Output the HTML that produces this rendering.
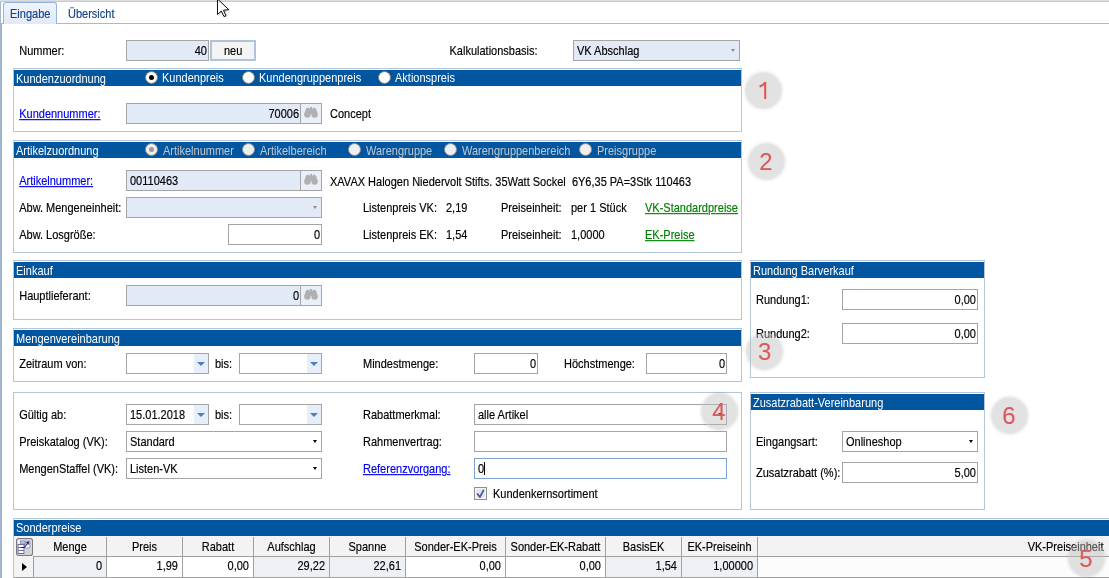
<!DOCTYPE html><html><head><meta charset="utf-8"><style>
html,body{margin:0;padding:0;width:1109px;height:578px;overflow:hidden;background:#fff}
body{position:relative;font-family:"Liberation Sans",sans-serif;font-size:11px;color:#000}
.a{position:absolute}
.t{position:absolute;white-space:pre;line-height:13px;font-size:11px;transform:scaleY(1.13);transform-origin:0 10.3px;-webkit-text-stroke:0.15px currentColor}
.w{color:#fff;-webkit-text-stroke:0}
.lk{color:#0000ee;text-decoration:underline}
.gl{color:#008000;text-decoration:underline}
.dis{color:#c4c8cd;-webkit-text-stroke:0}
.circ{border-radius:50%;background:rgba(190,190,190,0.44);box-shadow:0 0 3px 1px rgba(0,0,0,0.08), inset 0 0 1px 1px rgba(255,255,255,0.22)}
.dig{width:30px;text-align:center;font-size:24px;line-height:24px;color:#dc585a}
</style></head><body>
<div class="a" style="left:0px;top:0px;width:1109px;height:1px;background:#dcdcdc"></div>
<div class="a" style="left:0px;top:1px;width:1109px;height:1px;background:#cacaca"></div>
<div class="a" style="left:0px;top:2px;width:1px;height:576px;background:#a3b7cf"></div>
<div class="a" style="left:1px;top:23px;width:1px;height:555px;background:#8fb1e0"></div>
<div class="a" style="left:1px;top:23px;width:1108px;height:1px;background:#9cbbe5"></div>
<div class="a" style="left:3px;top:2px;width:54px;height:22px;border:1px solid #92b4e3;border-bottom:none;box-sizing:border-box;border-radius:3px 3px 0 0;background:linear-gradient(#eef3fb,#e3eaf6)"></div>
<div class="t " style="left:10px;top:7.7px;color:#15428b">Eingabe</div>
<div class="t " style="left:68px;top:7.7px;color:#15428b">&Uuml;bersicht</div>
<div class="t " style="left:19.2px;top:44.7px;">Nummer:</div>
<div class="a" style="left:126px;top:40px;width:83px;height:21px;border:1px solid #a5a5a5;box-sizing:border-box;background:#e2e9f7"></div>
<div class="t " style="right:902px;top:44.7px;color:#000">40</div>
<div class="a" style="left:210px;top:40px;width:46px;height:21px;border:2px solid #aec3dc;box-sizing:border-box;background:#f4f4f4"></div>
<div class="t " style="left:224px;top:44.7px;">neu</div>
<div class="t " style="left:449.5px;top:44.7px;">Kalkulationsbasis:</div>
<div class="a" style="left:573px;top:40px;width:167px;height:21px;border:1px solid #a5a5a5;box-sizing:border-box;background:#e2e9f7"></div>
<div class="t " style="left:577px;top:44.7px;color:#000">VK Abschlag</div>
<div class="a" style="left:730.5px;top:49.0px;width:0;height:0;border-left:2.5px solid transparent;border-right:2.5px solid transparent;border-top:3px solid #8c8c8c"></div>
<div class="a" style="left:13px;top:68px;width:729px;height:64px;border:1px solid #b5c6d9;box-sizing:border-box;background:#fff"></div>
<div class="a" style="left:14px;top:70px;width:727px;height:16px;background:#02559f"></div>
<div class="t w" style="left:16px;top:72.5px;">Kundenzuordnung</div>
<!-- radios -->
<div class="a" style="left:144.5px;top:70.5px;width:11px;height:11px;border-radius:50%;border:1px solid #7a7a7a;background:#fff"></div>
<div class="a" style="left:148.5px;top:74.5px;width:5px;height:5px;border-radius:50%;background:#000"></div>
<div class="t w" style="left:162px;top:72.2px;">Kundenpreis</div>
<div class="a" style="left:241.5px;top:70.5px;width:11px;height:11px;border-radius:50%;border:1px solid #7a7a7a;background:#fff"></div>
<div class="t w" style="left:259px;top:72.2px;">Kundengruppenpreis</div>
<div class="a" style="left:377.5px;top:70.5px;width:11px;height:11px;border-radius:50%;border:1px solid #7a7a7a;background:#fff"></div>
<div class="t w" style="left:395px;top:72.2px;">Aktionspreis</div>
<div class="t lk" style="left:19.2px;top:107.7px;">Kundennummer:</div>
<div class="a" style="left:126px;top:103px;width:175px;height:21px;border:1px solid #a5a5a5;box-sizing:border-box;background:#e2e9f7"></div>
<div class="t " style="right:810px;top:107.7px;color:#000">70006</div>
<div class="a" style="left:300px;top:103px;width:22px;height:21px;border:1px solid #a5a5a5;box-sizing:border-box;background:#e9f0fa"></div>
<svg class="a" style="left:304px;top:107px" width="14" height="11" viewBox="0 0 14 11"><g fill="#b0b0b0"><circle cx="3.4" cy="7.6" r="3.2"/><circle cx="10.6" cy="7.6" r="3.2"/><path d="M0.4 7 L1.8 2 Q2.6 0.8 4 0.8 L5.2 0.8 L6 4.5 L8 4.5 L8.8 0.8 L10 0.8 Q11.4 0.8 12.2 2 L13.6 7 Z"/><rect x="5" y="2" width="4" height="4"/><rect x="6" y="0" width="2" height="2"/></g></svg>
<div class="t " style="left:330px;top:107.7px;">Concept</div>
<div class="a circ" style="left:745.3px;top:71.7px;width:37.0px;height:37.0px"></div>
<svg class="a" style="left:757.8px;top:81.2px" width="12" height="19" viewBox="0 0 12 19"><path d="M7.2 1 L7.2 18" stroke="#dc585a" stroke-width="2.1" fill="none"/><path d="M7.2 1.2 Q5.5 4.2 1.6 5.8" stroke="#dc585a" stroke-width="2" fill="none"/></svg>
<div class="a" style="left:13px;top:140px;width:729px;height:113px;border:1px solid #b5c6d9;box-sizing:border-box;background:#fff"></div>
<div class="a" style="left:14px;top:142px;width:727px;height:16px;background:#02559f"></div>
<div class="t w" style="left:16px;top:144.5px;">Artikelzuordnung</div>
<div class="a" style="left:144.5px;top:142.5px;width:11px;height:11px;border-radius:50%;border:1px solid #8c8c8c;background:#eeeeee"></div>
<div class="a" style="left:148.5px;top:146.5px;width:5px;height:5px;border-radius:50%;background:#9a9a9a"></div>
<div class="t dis" style="left:163px;top:144.5px;">Artikelnummer</div>
<div class="a" style="left:241.5px;top:142.5px;width:11px;height:11px;border-radius:50%;border:1px solid #8c8c8c;background:#eeeeee"></div>
<div class="t dis" style="left:260px;top:144.5px;">Artikelbereich</div>
<div class="a" style="left:347.5px;top:142.5px;width:11px;height:11px;border-radius:50%;border:1px solid #8c8c8c;background:#eeeeee"></div>
<div class="t dis" style="left:366px;top:144.5px;">Warengruppe</div>
<div class="a" style="left:443.5px;top:142.5px;width:11px;height:11px;border-radius:50%;border:1px solid #8c8c8c;background:#eeeeee"></div>
<div class="t dis" style="left:462px;top:144.5px;">Warengruppenbereich</div>
<div class="a" style="left:578.5px;top:142.5px;width:11px;height:11px;border-radius:50%;border:1px solid #8c8c8c;background:#eeeeee"></div>
<div class="t dis" style="left:597px;top:144.5px;">Preisgruppe</div>
<div class="t lk" style="left:19.2px;top:174.7px;">Artikelnummer:</div>
<div class="a" style="left:126px;top:170px;width:175px;height:21px;border:1px solid #a5a5a5;box-sizing:border-box;background:#e2e9f7"></div>
<div class="t " style="left:130px;top:174.7px;color:#000">00110463</div>
<div class="a" style="left:300px;top:170px;width:22px;height:21px;border:1px solid #a5a5a5;box-sizing:border-box;background:#e9f0fa"></div>
<svg class="a" style="left:304px;top:174px" width="14" height="11" viewBox="0 0 14 11"><g fill="#b0b0b0"><circle cx="3.4" cy="7.6" r="3.2"/><circle cx="10.6" cy="7.6" r="3.2"/><path d="M0.4 7 L1.8 2 Q2.6 0.8 4 0.8 L5.2 0.8 L6 4.5 L8 4.5 L8.8 0.8 L10 0.8 Q11.4 0.8 12.2 2 L13.6 7 Z"/><rect x="5" y="2" width="4" height="4"/><rect x="6" y="0" width="2" height="2"/></g></svg>
<div class="t " style="left:330px;top:175.7px;">XAVAX Halogen Niedervolt Stifts. 35Watt Sockel  6Y6,35 PA=3Stk 110463</div>
<div class="t " style="left:19.2px;top:201.7px;">Abw. Mengeneinheit:</div>
<div class="a" style="left:126px;top:197px;width:196px;height:21px;border:1px solid #a5a5a5;box-sizing:border-box;background:#e2e9f7"></div>
<div class="a" style="left:313.0px;top:205.5px;width:0;height:0;border-left:2.5px solid transparent;border-right:2.5px solid transparent;border-top:3px solid #8c8c8c"></div>
<div class="t " style="left:363px;top:201.7px;">Listenpreis VK:</div>
<div class="t " style="left:446px;top:201.7px;">2,19</div>
<div class="t " style="left:501px;top:201.7px;">Preiseinheit:</div>
<div class="t " style="left:571px;top:201.7px;">per 1 St&uuml;ck</div>
<div class="t gl" style="left:645px;top:201.7px;">VK-Standardpreise</div>
<div class="t " style="left:19.2px;top:228.7px;">Abw. Losgr&ouml;&szlig;e:</div>
<div class="a" style="left:228px;top:224px;width:94px;height:21px;border:1px solid #a5a5a5;box-sizing:border-box;background:#fff"></div>
<div class="t " style="right:789px;top:228.7px;color:#000">0</div>
<div class="t " style="left:363px;top:228.7px;">Listenpreis EK:</div>
<div class="t " style="left:446px;top:228.7px;">1,54</div>
<div class="t " style="left:501px;top:228.7px;">Preiseinheit:</div>
<div class="t " style="left:571px;top:228.7px;">1,0000</div>
<div class="t gl" style="left:645px;top:228.7px;">EK-Preise</div>
<div class="a circ" style="left:747.5px;top:142.6px;width:37.0px;height:37.0px"></div>
<div class="a dig" style="left:751.0px;top:149.7px">2</div>
<div class="a" style="left:13px;top:260px;width:729px;height:60px;border:1px solid #b5c6d9;box-sizing:border-box;background:#fff"></div>
<div class="a" style="left:14px;top:262px;width:727px;height:16px;background:#02559f"></div>
<div class="t w" style="left:16px;top:264.5px;">Einkauf</div>
<div class="t " style="left:19.2px;top:289.7px;">Hauptlieferant:</div>
<div class="a" style="left:126px;top:285px;width:175px;height:21px;border:1px solid #a5a5a5;box-sizing:border-box;background:#e2e9f7"></div>
<div class="t " style="right:810px;top:289.7px;color:#000">0</div>
<div class="a" style="left:300px;top:285px;width:22px;height:21px;border:1px solid #a5a5a5;box-sizing:border-box;background:#e9f0fa"></div>
<svg class="a" style="left:304px;top:289px" width="14" height="11" viewBox="0 0 14 11"><g fill="#b0b0b0"><circle cx="3.4" cy="7.6" r="3.2"/><circle cx="10.6" cy="7.6" r="3.2"/><path d="M0.4 7 L1.8 2 Q2.6 0.8 4 0.8 L5.2 0.8 L6 4.5 L8 4.5 L8.8 0.8 L10 0.8 Q11.4 0.8 12.2 2 L13.6 7 Z"/><rect x="5" y="2" width="4" height="4"/><rect x="6" y="0" width="2" height="2"/></g></svg>
<div class="a" style="left:13px;top:328px;width:729px;height:54px;border:1px solid #b5c6d9;box-sizing:border-box;background:#fff"></div>
<div class="a" style="left:14px;top:330px;width:727px;height:16px;background:#02559f"></div>
<div class="t w" style="left:16px;top:332.5px;">Mengenvereinbarung</div>
<div class="t " style="left:19.2px;top:357.7px;">Zeitraum von:</div>
<div class="a" style="left:126px;top:353px;width:83px;height:21px;border:1px solid #a5a5a5;box-sizing:border-box;background:#fff"></div>
<div class="a" style="left:194px;top:354px;width:14px;height:19px;background:#e6eef9"></div>
<div class="a" style="left:197.0px;top:361.5px;width:0;height:0;border-left:4.0px solid transparent;border-right:4.0px solid transparent;border-top:4px solid #4d7fbf"></div>
<div class="t " style="left:215px;top:357.7px;">bis:</div>
<div class="a" style="left:239px;top:353px;width:83px;height:21px;border:1px solid #a5a5a5;box-sizing:border-box;background:#fff"></div>
<div class="a" style="left:307px;top:354px;width:14px;height:19px;background:#e6eef9"></div>
<div class="a" style="left:310.0px;top:361.5px;width:0;height:0;border-left:4.0px solid transparent;border-right:4.0px solid transparent;border-top:4px solid #4d7fbf"></div>
<div class="t " style="left:363px;top:357.7px;">Mindestmenge:</div>
<div class="a" style="left:474px;top:353px;width:64px;height:21px;border:1px solid #a5a5a5;box-sizing:border-box;background:#fff"></div>
<div class="t " style="right:573px;top:357.7px;color:#000">0</div>
<div class="t " style="left:564px;top:357.7px;">H&ouml;chstmenge:</div>
<div class="a" style="left:646px;top:353px;width:81px;height:21px;border:1px solid #a5a5a5;box-sizing:border-box;background:#fff"></div>
<div class="t " style="right:384px;top:357.7px;color:#000">0</div>
<div class="a" style="left:750px;top:260px;width:235px;height:118px;border:1px solid #b5c6d9;box-sizing:border-box;background:#fff"></div>
<div class="a" style="left:751px;top:262px;width:233px;height:16px;background:#02559f"></div>
<div class="t w" style="left:753px;top:264.5px;">Rundung Barverkauf</div>
<div class="t " style="left:756px;top:293.7px;">Rundung1:</div>
<div class="a" style="left:842px;top:289px;width:136px;height:21px;border:1px solid #a5a5a5;box-sizing:border-box;background:#fff"></div>
<div class="t " style="right:133px;top:293.7px;color:#000">0,00</div>
<div class="t " style="left:756px;top:327.7px;">Rundung2:</div>
<div class="a" style="left:842px;top:323px;width:136px;height:21px;border:1px solid #a5a5a5;box-sizing:border-box;background:#fff"></div>
<div class="t " style="right:133px;top:327.7px;color:#000">0,00</div>
<div class="a circ" style="left:746.3px;top:332.7px;width:37.0px;height:37.0px"></div>
<div class="a dig" style="left:749.8px;top:339.8px">3</div>
<div class="a" style="left:13px;top:392px;width:729px;height:118px;border:1px solid #b5c6d9;box-sizing:border-box;background:#fff"></div>
<div class="t " style="left:19.2px;top:408.7px;">G&uuml;ltig ab:</div>
<div class="a" style="left:126px;top:404px;width:83px;height:21px;border:1px solid #a5a5a5;box-sizing:border-box;background:#fff"></div>
<div class="a" style="left:194px;top:405px;width:14px;height:19px;background:#e6eef9"></div>
<div class="a" style="left:197.0px;top:412.5px;width:0;height:0;border-left:4.0px solid transparent;border-right:4.0px solid transparent;border-top:4px solid #4d7fbf"></div>
<div class="t " style="left:130px;top:408.7px;">15.01.2018</div>
<div class="t " style="left:215px;top:408.7px;">bis:</div>
<div class="a" style="left:239px;top:404px;width:83px;height:21px;border:1px solid #a5a5a5;box-sizing:border-box;background:#fff"></div>
<div class="a" style="left:307px;top:405px;width:14px;height:19px;background:#e6eef9"></div>
<div class="a" style="left:310.0px;top:412.5px;width:0;height:0;border-left:4.0px solid transparent;border-right:4.0px solid transparent;border-top:4px solid #4d7fbf"></div>
<div class="t " style="left:19.2px;top:435.7px;">Preiskatalog (VK):</div>
<div class="a" style="left:126px;top:431px;width:196px;height:21px;border:1px solid #a5a5a5;box-sizing:border-box;background:#fff"></div>
<div class="t " style="left:130px;top:435.7px;color:#000">Standard</div>
<div class="a" style="left:312.5px;top:439.5px;width:0;height:0;border-left:2.5px solid transparent;border-right:2.5px solid transparent;border-top:3px solid #000"></div>
<div class="t " style="left:19.2px;top:462.7px;">MengenStaffel (VK):</div>
<div class="a" style="left:126px;top:458px;width:196px;height:21px;border:1px solid #a5a5a5;box-sizing:border-box;background:#fff"></div>
<div class="t " style="left:130px;top:462.7px;color:#000">Listen-VK</div>
<div class="a" style="left:312.5px;top:466.5px;width:0;height:0;border-left:2.5px solid transparent;border-right:2.5px solid transparent;border-top:3px solid #000"></div>
<div class="t " style="left:363px;top:408.7px;">Rabattmerkmal:</div>
<div class="a" style="left:474px;top:404px;width:253px;height:21px;border:1px solid #a5a5a5;box-sizing:border-box;background:#fff"></div>
<div class="t " style="left:478px;top:408.7px;color:#000">alle Artikel</div>
<div class="a" style="left:717.5px;top:412.5px;width:0;height:0;border-left:2.5px solid transparent;border-right:2.5px solid transparent;border-top:3px solid #000"></div>
<div class="t " style="left:363px;top:435.7px;">Rahmenvertrag:</div>
<div class="a" style="left:474px;top:431px;width:253px;height:21px;border:1px solid #a5a5a5;box-sizing:border-box;background:#fff"></div>
<div class="t lk" style="left:363px;top:462.7px;">Referenzvorgang:</div>
<div class="a" style="left:474px;top:458px;width:253px;height:21px;border:1px solid #7ea3d0;box-sizing:border-box;background:#fff"></div>
<div class="t " style="left:478px;top:462.7px;color:#000">0</div>
<div class="a" style="left:484px;top:462px;width:1px;height:13px;background:#000"></div>
<div class="a" style="left:474px;top:487px;width:13px;height:13px;border:1px solid #8e8f8f;box-sizing:border-box;background:#f4f4f4"></div>
<svg class="a" style="left:476px;top:489px" width="9" height="9" viewBox="0 0 9 9"><rect x="0.5" y="0.5" width="8" height="8" fill="#dfe3ea"/><path d="M1.5 5 L3.9 8 L7.5 1.3" stroke="#4558a0" stroke-width="1.7" fill="none" stroke-linecap="round"/></svg>
<div class="t " style="left:493px;top:487.7px;">Kundenkernsortiment</div>
<div class="a circ" style="left:700.5px;top:393.3px;width:37.0px;height:37.0px"></div>
<div class="a dig" style="left:704.0px;top:400.4px">4</div>
<div class="a" style="left:750px;top:392px;width:235px;height:118px;border:1px solid #b5c6d9;box-sizing:border-box;background:#fff"></div>
<div class="a" style="left:751px;top:394px;width:233px;height:16px;background:#02559f"></div>
<div class="t w" style="left:753px;top:396.5px;">Zusatzrabatt-Vereinbarung</div>
<div class="t " style="left:756px;top:435.7px;">Eingangsart:</div>
<div class="a" style="left:842px;top:431px;width:136px;height:21px;border:1px solid #a5a5a5;box-sizing:border-box;background:#fff"></div>
<div class="t " style="left:846px;top:435.7px;color:#000">Onlineshop</div>
<div class="a" style="left:968.5px;top:439.5px;width:0;height:0;border-left:2.5px solid transparent;border-right:2.5px solid transparent;border-top:3px solid #000"></div>
<div class="t " style="left:756px;top:466.7px;">Zusatzrabatt (%):</div>
<div class="a" style="left:842px;top:462px;width:136px;height:21px;border:1px solid #a5a5a5;box-sizing:border-box;background:#fff"></div>
<div class="t " style="right:133px;top:466.7px;color:#000">5,00</div>
<div class="a circ" style="left:990.5px;top:396.7px;width:37.0px;height:37.0px"></div>
<div class="a dig" style="left:994.0px;top:403.8px">6</div>
<div class="a" style="left:13px;top:518px;width:1096px;height:60px;border:1px solid #b5c6d9;border-right:none;box-sizing:border-box;background:#fff"></div>
<div class="a" style="left:14px;top:520px;width:1095px;height:16px;background:#02559f"></div>
<div class="t w" style="left:16px;top:522.2px;">Sonderpreise</div>
<div class="a" style="left:14px;top:536px;width:1095px;height:42px;background:#f3f3f3"></div>
<div class="a" style="left:33px;top:556px;width:1076px;height:1px;background:#a0a0a0"></div>
<div class="a" style="left:34px;top:557px;width:1075px;height:20px;background:#fcfcfc"></div>
<div class="a" style="left:34px;top:557px;width:72px;height:20px;background:#edf0f5"></div>
<div class="a" style="left:106px;top:537px;width:1px;height:41px;background:#a0a0a0"></div>
<div class="t" style="left:34px;width:72px;text-align:center;top:540.7px">Menge</div>
<div class="t " style="right:1007px;top:559.7px;">0</div>
<div class="a" style="left:107px;top:557px;width:75px;height:20px;background:#fff"></div>
<div class="a" style="left:182px;top:537px;width:1px;height:41px;background:#a0a0a0"></div>
<div class="t" style="left:107px;width:75px;text-align:center;top:540.7px">Preis</div>
<div class="t " style="right:931px;top:559.7px;">1,99</div>
<div class="a" style="left:183px;top:557px;width:70px;height:20px;background:#fff"></div>
<div class="a" style="left:253px;top:537px;width:1px;height:41px;background:#a0a0a0"></div>
<div class="t" style="left:183px;width:70px;text-align:center;top:540.7px">Rabatt</div>
<div class="t " style="right:860px;top:559.7px;">0,00</div>
<div class="a" style="left:254px;top:557px;width:75px;height:20px;background:#edf0f5"></div>
<div class="a" style="left:329px;top:537px;width:1px;height:41px;background:#a0a0a0"></div>
<div class="t" style="left:254px;width:75px;text-align:center;top:540.7px">Aufschlag</div>
<div class="t " style="right:784px;top:559.7px;">29,22</div>
<div class="a" style="left:330px;top:557px;width:75px;height:20px;background:#edf0f5"></div>
<div class="a" style="left:405px;top:537px;width:1px;height:41px;background:#a0a0a0"></div>
<div class="t" style="left:330px;width:75px;text-align:center;top:540.7px">Spanne</div>
<div class="t " style="right:708px;top:559.7px;">22,61</div>
<div class="a" style="left:406px;top:557px;width:99px;height:20px;background:#fff"></div>
<div class="a" style="left:505px;top:537px;width:1px;height:41px;background:#a0a0a0"></div>
<div class="t" style="left:406px;width:99px;text-align:center;top:540.7px">Sonder-EK-Preis</div>
<div class="t " style="right:608px;top:559.7px;">0,00</div>
<div class="a" style="left:506px;top:557px;width:99px;height:20px;background:#fff"></div>
<div class="a" style="left:605px;top:537px;width:1px;height:41px;background:#a0a0a0"></div>
<div class="t" style="left:506px;width:99px;text-align:center;top:540.7px">Sonder-EK-Rabatt</div>
<div class="t " style="right:508px;top:559.7px;">0,00</div>
<div class="a" style="left:606px;top:557px;width:75px;height:20px;background:#edf0f5"></div>
<div class="a" style="left:681px;top:537px;width:1px;height:41px;background:#a0a0a0"></div>
<div class="t" style="left:606px;width:75px;text-align:center;top:540.7px">BasisEK</div>
<div class="t " style="right:432px;top:559.7px;">1,54</div>
<div class="a" style="left:682px;top:557px;width:75px;height:20px;background:#edf0f5"></div>
<div class="a" style="left:757px;top:537px;width:1px;height:41px;background:#a0a0a0"></div>
<div class="t" style="left:682px;width:75px;text-align:center;top:540.7px">EK-Preiseinh</div>
<div class="t " style="right:356px;top:559.7px;">1,00000</div>
<div class="a" style="left:33px;top:556px;width:1px;height:22px;background:#a0a0a0"></div>
<div class="a" style="left:14px;top:577px;width:1095px;height:1px;background:#a0a0a0"></div>
<div class="t " style="right:5.5px;top:540.7px;">VK-Preiseinheit</div>
<div class="a" style="left:22px;top:563px;width:0;height:0;border-top:4.5px solid transparent;border-bottom:4.5px solid transparent;border-left:5px solid #000"></div>
<svg class="a" style="left:16px;top:538px" width="17" height="18" viewBox="0 0 17 18"><rect x="0.6" y="0.6" width="15.8" height="16.8" rx="2" fill="#f2f2f2" stroke="#7b7b7b" stroke-width="1.2"/><rect x="4" y="2.5" width="10.5" height="8" fill="#8c8cc8"/><rect x="5" y="3.5" width="3.5" height="2" fill="#c8c8ea"/><rect x="9.5" y="3.5" width="4" height="2" fill="#c8c8ea"/><rect x="9.5" y="6.5" width="4" height="3" fill="#fff"/><rect x="1.5" y="6" width="7" height="10" fill="#6a6ab0"/><rect x="2.5" y="7" width="5" height="2" fill="#fff"/><rect x="2.5" y="10" width="5" height="2" fill="#fff"/><rect x="2.5" y="13" width="5" height="2" fill="#fff"/><rect x="9" y="11" width="6" height="5" fill="#d4d4d4"/><path d="M5 9.5 L8.5 9.5 L11.5 5.5" stroke="#222" stroke-width="1" fill="none"/><path d="M10 4.5 L13 3.2 L12.5 6.5 Z" fill="#222"/></svg>
<div class="a circ" style="left:1067.5px;top:539.7px;width:37.0px;height:37.0px"></div>
<div class="a dig" style="left:1071.0px;top:546.8px">5</div>
<svg class="a" style="left:216px;top:-3px" width="18" height="26" viewBox="0 0 18 26"><defs><filter id="cs" x="-50%" y="-50%" width="200%" height="200%"><feGaussianBlur stdDeviation="1.2"/></filter></defs><path d="M2.5 3 L2.5 18.5 L6.3 15 L9 20.5 L11 19.8 L8.5 14.2 L13.8 13.7 Z" fill="#000" opacity="0.25" filter="url(#cs)"/><path d="M1.5 2 L1.5 17.5 L5.3 14 L8 19.5 L10 18.8 L7.5 13.2 L12.8 12.7 Z" fill="#fff" stroke="#111" stroke-width="1" stroke-linejoin="miter"/></svg>
</body></html>
